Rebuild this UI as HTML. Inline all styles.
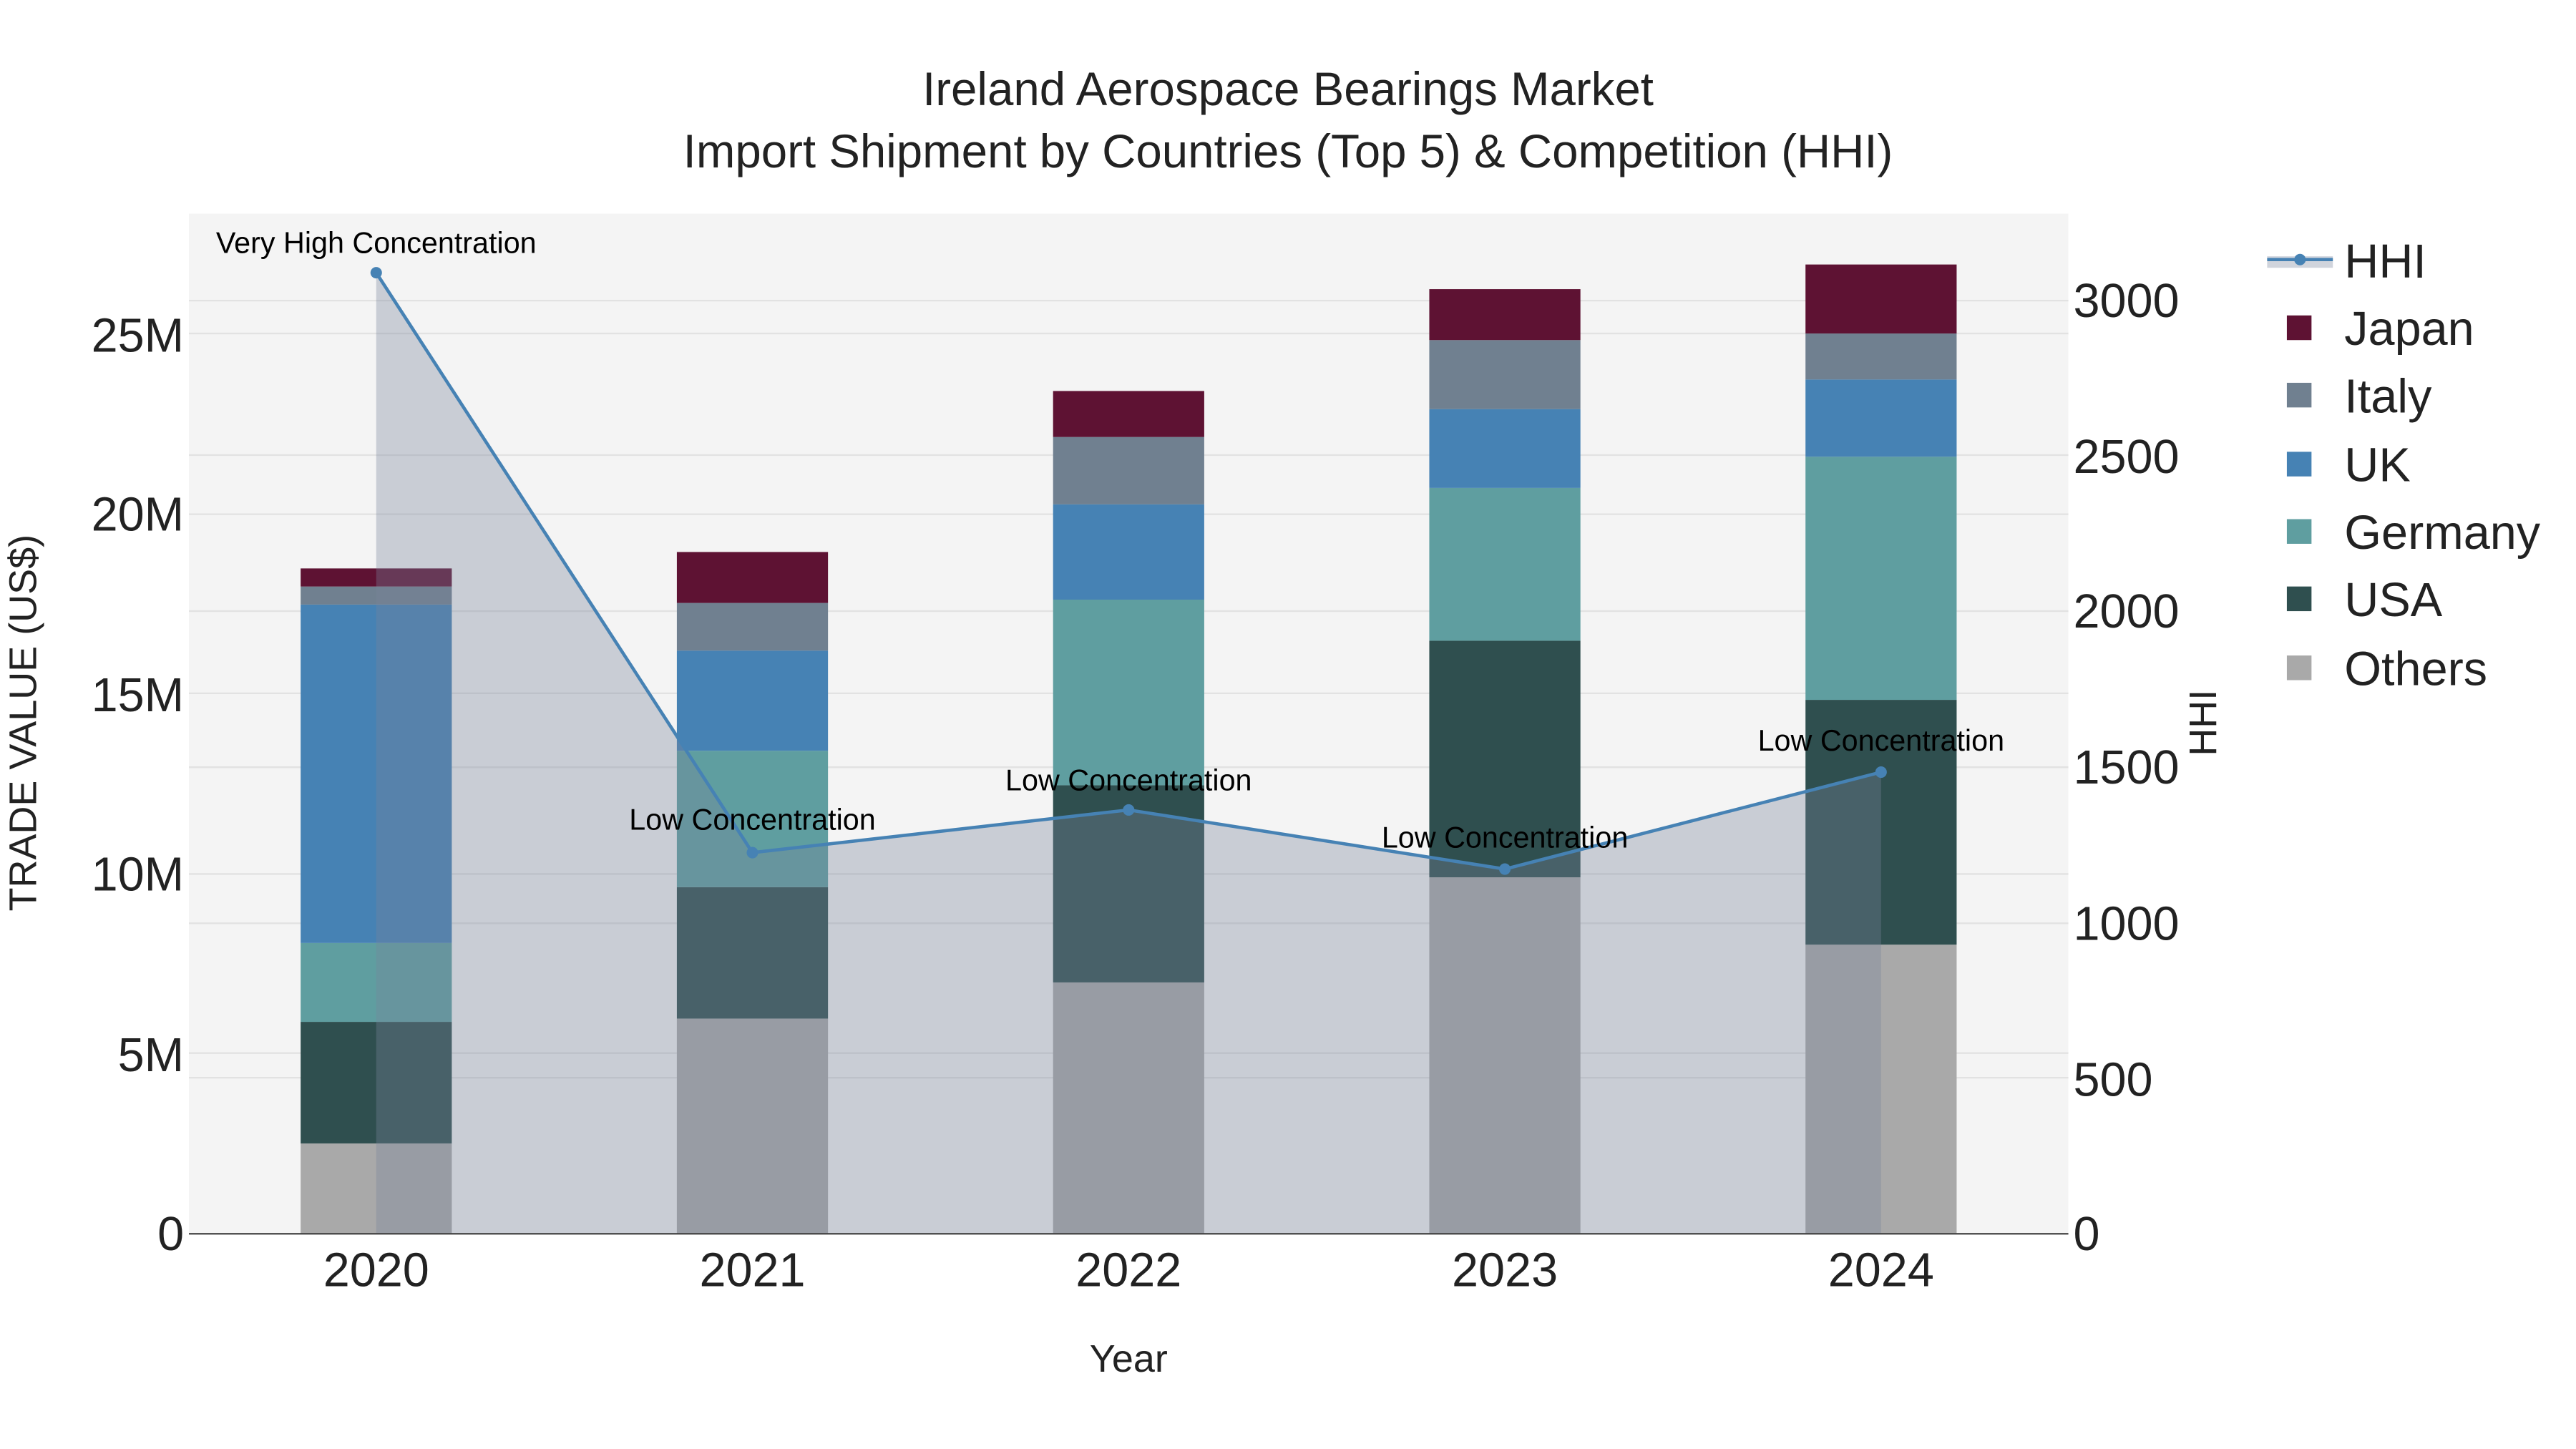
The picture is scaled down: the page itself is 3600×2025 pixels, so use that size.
<!DOCTYPE html>
<html><head><meta charset="utf-8"><style>html,body{margin:0;padding:0;background:#fff}svg{display:block}</style></head>
<body>
<svg width="3600" height="2025" viewBox="0 0 1568 882" xmlns="http://www.w3.org/2000/svg" font-family="Liberation Sans, sans-serif">
<rect width="1568" height="882" fill="#fff"/>
<rect x="115" y="130" width="1144" height="621" fill="#f4f4f4"/>
<g stroke="#e2e2e2" stroke-width="1">
<line x1="115" x2="1259" y1="641" y2="641"/><line x1="115" x2="1259" y1="532" y2="532"/><line x1="115" x2="1259" y1="422" y2="422"/><line x1="115" x2="1259" y1="313" y2="313"/><line x1="115" x2="1259" y1="203" y2="203"/>
<line x1="115" x2="1259" y1="656" y2="656"/><line x1="115" x2="1259" y1="562" y2="562"/><line x1="115" x2="1259" y1="467" y2="467"/><line x1="115" x2="1259" y1="372" y2="372"/><line x1="115" x2="1259" y1="277" y2="277"/><line x1="115" x2="1259" y1="183" y2="183"/>
</g>
<g>
<rect x="183" y="696" width="92" height="55" fill="#a9a9a9"/><rect x="183" y="622" width="92" height="74" fill="#2f4f4f"/><rect x="183" y="574" width="92" height="48" fill="#5f9ea0"/><rect x="183" y="368" width="92" height="206" fill="#4682b4"/><rect x="183" y="357" width="92" height="11" fill="#708090"/><rect x="183" y="346" width="92" height="11" fill="#5e1233"/>
<rect x="412" y="620" width="92" height="131" fill="#a9a9a9"/><rect x="412" y="540" width="92" height="80" fill="#2f4f4f"/><rect x="412" y="457" width="92" height="83" fill="#5f9ea0"/><rect x="412" y="396" width="92" height="61" fill="#4682b4"/><rect x="412" y="367" width="92" height="29" fill="#708090"/><rect x="412" y="336" width="92" height="31" fill="#5e1233"/>
<rect x="641" y="598" width="92" height="153" fill="#a9a9a9"/><rect x="641" y="478" width="92" height="120" fill="#2f4f4f"/><rect x="641" y="365" width="92" height="113" fill="#5f9ea0"/><rect x="641" y="307" width="92" height="58" fill="#4682b4"/><rect x="641" y="266" width="92" height="41" fill="#708090"/><rect x="641" y="238" width="92" height="28" fill="#5e1233"/>
<rect x="870" y="534" width="92" height="217" fill="#a9a9a9"/><rect x="870" y="390" width="92" height="144" fill="#2f4f4f"/><rect x="870" y="297" width="92" height="93" fill="#5f9ea0"/><rect x="870" y="249" width="92" height="48" fill="#4682b4"/><rect x="870" y="207" width="92" height="42" fill="#708090"/><rect x="870" y="176" width="92" height="31" fill="#5e1233"/>
<rect x="1099" y="575" width="92" height="176" fill="#a9a9a9"/><rect x="1099" y="426" width="92" height="149" fill="#2f4f4f"/><rect x="1099" y="278" width="92" height="148" fill="#5f9ea0"/><rect x="1099" y="231" width="92" height="47" fill="#4682b4"/><rect x="1099" y="203" width="92" height="28" fill="#708090"/><rect x="1099" y="161" width="92" height="42" fill="#5e1233"/>
</g>
<polygon points="229,751 229,166 458,519 687,493 916,529 1145,470 1145,751" fill="rgba(120,133,155,0.35)"/>
<polyline points="229,166 458,519 687,493 916,529 1145,470" fill="none" stroke="#4682b4" stroke-width="2"/>
<g fill="#4682b4"><circle cx="229" cy="166" r="3.5"/><circle cx="458" cy="519" r="3.5"/><circle cx="687" cy="493" r="3.5"/><circle cx="916" cy="529" r="3.5"/><circle cx="1145" cy="470" r="3.5"/></g>
<line x1="115" x2="1259" y1="751" y2="751" stroke="#444" stroke-width="1"/>
<g font-size="18" fill="#000" text-anchor="middle">
<text x="229" y="154">Very High Concentration</text>
<text x="458" y="505">Low Concentration</text>
<text x="687" y="481">Low Concentration</text>
<text x="916" y="516">Low Concentration</text>
<text x="1145" y="457">Low Concentration</text>
</g>
<g font-size="28.5" fill="#222" text-anchor="middle">
<text x="784" y="64">Ireland Aerospace Bearings Market</text>
<text x="784" y="102">Import Shipment by Countries (Top 5) &amp; Competition (HHI)</text>
</g>
<g font-size="29" fill="#222" text-anchor="end">
<text x="112" y="761">0</text><text x="112" y="652">5M</text><text x="112" y="542">10M</text><text x="112" y="433">15M</text><text x="112" y="323">20M</text><text x="112" y="214">25M</text>
</g>
<g font-size="29" fill="#222">
<text x="1262" y="761">0</text><text x="1262" y="667">500</text><text x="1262" y="572">1000</text><text x="1262" y="477">1500</text><text x="1262" y="382">2000</text><text x="1262" y="288">2500</text><text x="1262" y="193">3000</text>
</g>
<g font-size="29" fill="#222" text-anchor="middle">
<text x="229" y="783">2020</text><text x="458" y="783">2021</text><text x="687" y="783">2022</text><text x="916" y="783">2023</text><text x="1145" y="783">2024</text>
</g>
<text x="687" y="835" font-size="23.5" fill="#222" text-anchor="middle">Year</text>
<text transform="translate(22,440) rotate(-90)" font-size="23.5" fill="#222" text-anchor="middle">TRADE VALUE (US$)</text>
<text transform="translate(1349,440) rotate(-90)" font-size="23.5" fill="#222" text-anchor="middle">HHI</text>
<rect x="1380" y="156" width="40" height="7" fill="rgba(120,133,155,0.35)"/>
<line x1="1380" x2="1420" y1="158" y2="158" stroke="#4682b4" stroke-width="2"/><circle cx="1400" cy="158" r="3.5" fill="#4682b4"/>
<g>
<rect x="1392" y="192" width="15" height="15" fill="#5e1233"/>
<rect x="1392" y="233" width="15" height="15" fill="#708090"/>
<rect x="1392" y="275" width="15" height="15" fill="#4682b4"/>
<rect x="1392" y="316" width="15" height="15" fill="#5f9ea0"/>
<rect x="1392" y="357" width="15" height="15" fill="#2f4f4f"/>
<rect x="1392" y="399" width="15" height="15" fill="#a9a9a9"/>
</g>
<g font-size="29" fill="#222">
<text x="1427" y="169">HHI</text><text x="1427" y="210">Japan</text><text x="1427" y="251">Italy</text><text x="1427" y="293">UK</text><text x="1427" y="334">Germany</text><text x="1427" y="375">USA</text><text x="1427" y="417">Others</text>
</g>
</svg>
</body></html>
